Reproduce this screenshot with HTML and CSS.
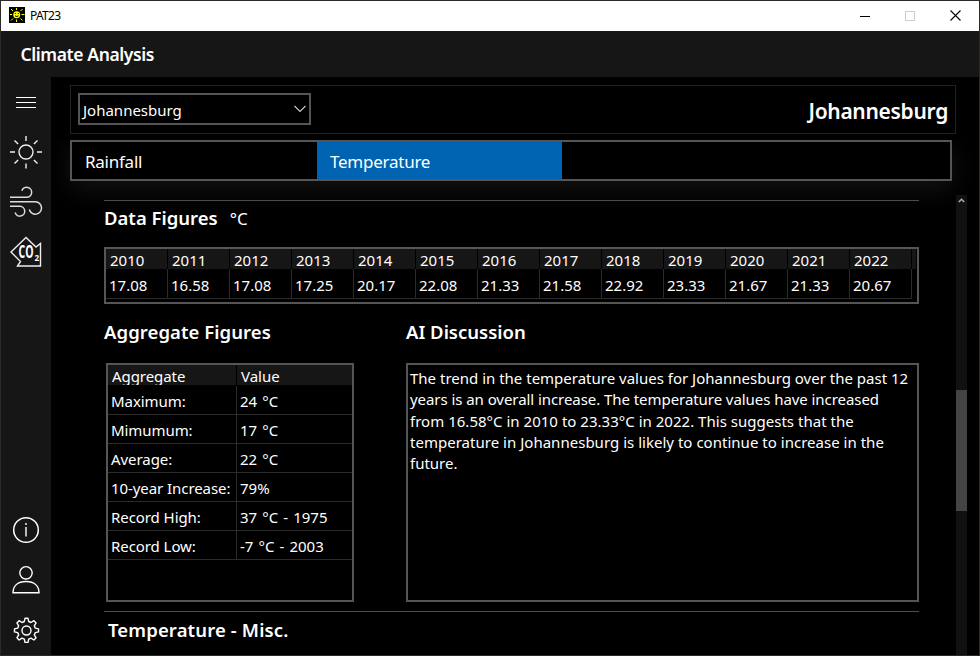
FILE: index.html
```html
<!DOCTYPE html>
<html lang="en">
<head>
<meta charset="utf-8">
<title>PAT23</title>
<link rel="stylesheet" href="styles.css">
</head>
<body>
<div class="window">
  <header class="titlebar">
    <svg class="app-icon" width="16" height="16" viewBox="0 0 16 16"><rect width="16" height="16" fill="#000"/><g stroke="#ff0" stroke-width="1" fill="none"><path d="M7.500 1v2M7.500 12.500v2.500M1 7.500h2M12.500 7.500h3M2 2l2 2M13.500 2l-2 2M2 13.500l2-2M13.500 13.500l-2-2" /></g><circle cx="7.700" cy="7.700" r="3.500" fill="#ff0"/><path d="M6.300 6v1M9.300 6v1M6 8.800q1.800 1.500 3.600 0" stroke="#000" fill="none"/></svg>
    <span class="app-name">PAT23</span>
    <div class="controls">
      <svg width="10" height="10" viewBox="0 0 10 10"><path d="M0 5.500h10" stroke="#000"/></svg>
      <svg width="10" height="10" viewBox="0 0 10 10"><rect x=".5" y=".5" width="9" height="9" fill="none" stroke="#ccc"/></svg>
      <svg width="11" height="11" viewBox="0 0 11 11"><path d="M.5.5l10 10M10.500.5l-10 10" stroke="#000" stroke-width="1.100"/></svg>
    </div>
  </header>
  <div class="heading"><span>Climate Analysis</span></div>
  <div class="body">
    <nav class="sidebar">
      <svg width="34" height="34" viewBox="0 0 34 34"><path d="M7 12.500h20M7 17.500h20M7 22.500h20" stroke="#fff"/></svg>
      <svg width="34" height="34" viewBox="0 0 34 34"><g fill="none" stroke="#eee" stroke-width="1.400"><circle cx="17" cy="17" r="7"/><path d="M17 1v5M17 28.500v5M1 17h5M28 17h5M5.500 5.500l3.600 3.600M28.500 5.500l-3.600 3.600M5.500 28.500l3.600-3.600M28.500 28.500l-3.600-3.600"/></g></svg>
      <svg width="34" height="34" viewBox="0 0 34 34"><g fill="none" stroke="#ddd" stroke-width="1.500"><path d="M1 12.300h16.500a5 5 0 1 0-4.600-6.500"/><path d="M1 16.800h25.500a6.200 6.200 0 1 1-6.200 7.700"/><path d="M1 21.300h10a4.900 4.900 0 1 1-4.900 6.200"/></g></svg>
      <svg width="34" height="34" viewBox="0 0 34 34"><path d="M17 2.500L2 17l9.500 9.500L8.500 31H31.500V8.500l-4.500 3.500z" fill="none" stroke="#eee" stroke-width="1.400"/><text class="co" x="9.500" y="23" textLength="15" lengthAdjust="spacingAndGlyphs">CO</text><text class="two" x="25.500" y="26">2</text></svg>
      <span class="spring"></span>
      <svg width="34" height="34" viewBox="0 0 34 34"><circle cx="17" cy="17" r="12.300" fill="none" stroke="#fff" stroke-width="1.500"/><path d="M17 14v9.500M17 10v2" stroke="#fff" stroke-width="1.400"/></svg>
      <svg width="34" height="34" viewBox="0 0 34 34"><g fill="none" stroke="#fff" stroke-width="1.400"><circle cx="17" cy="9.800" r="6.200"/><path d="M4 29.800C4 22.500 9 18.500 17 18.500s13 4 13 11.300z"/></g></svg>
      <svg width="34" height="34" viewBox="0 0 34 34"><g transform="translate(.5 .5)" fill="none" stroke="#fff" stroke-width="1.400" stroke-linejoin="round"><circle cx="17" cy="17" r="4.500"/><path d="M15.500 4.800h3l.7 3.200 2.300 1 2.900-1.800 2.200 2.200-1.800 2.900 1 2.300 3.200.8v3l-3.200.7-1 2.300 1.800 2.900-2.200 2.200-2.900-1.800-2.300 1-.7 3.200h-3l-.7-3.200-2.300-1-2.900 1.800-2.200-2.200 1.800-2.900-1-2.300L5 18.400v-3l3.200-.8 1-2.300-1.800-2.900 2.200-2.200L12.500 9l2.300-1z"/></g></svg>
    </nav>
    <main class="main">
      <div class="place">
        <div class="combo"><span>Johannesburg</span><svg width="12" height="8" viewBox="0 0 12 8"><path d="M.5 1L6 6.500 11.500 1" fill="none" stroke="#ccc" stroke-width="1.100"/></svg></div>
        <span class="place-name">Johannesburg</span>
      </div>
      <div class="tabs"><div class="tab">Rainfall</div><div class="tab active">Temperature</div></div>
      <div class="scroller">
        <div class="content">
          <section class="figures">
            <h2>Data Figures<span class="unit">°C</span></h2>
            <div class="years">
              <div class="year"><b>2010</b><span>17.08</span></div>
              <div class="year"><b>2011</b><span>16.58</span></div>
              <div class="year"><b>2012</b><span>17.08</span></div>
              <div class="year"><b>2013</b><span>17.25</span></div>
              <div class="year"><b>2014</b><span>20.17</span></div>
              <div class="year"><b>2015</b><span>22.08</span></div>
              <div class="year"><b>2016</b><span>21.33</span></div>
              <div class="year"><b>2017</b><span>21.58</span></div>
              <div class="year"><b>2018</b><span>22.92</span></div>
              <div class="year"><b>2019</b><span>23.33</span></div>
              <div class="year"><b>2020</b><span>21.67</span></div>
              <div class="year"><b>2021</b><span>21.33</span></div>
              <div class="year"><b>2022</b><span>20.67</span></div>
              <div class="filler"></div>
            </div>
          </section>
          <div class="split">
            <section class="agg">
              <h2>Aggregate Figures</h2>
              <div class="agg-table">
                <div class="row head"><div>Aggregate</div><div>Value</div></div>
                <div class="row"><div>Maximum:</div><div class="val">24 °C</div></div>
                <div class="row"><div>Mimumum:</div><div class="val">17 °C</div></div>
                <div class="row"><div>Average:</div><div class="val">22 °C</div></div>
                <div class="row"><div>10-year Increase:</div><div class="val">79%</div></div>
                <div class="row"><div>Record High:</div><div class="val">37 °C - 1975</div></div>
                <div class="row"><div>Record Low:</div><div class="val">-7 °C - 2003</div></div>
              </div>
            </section>
            <section class="ai">
              <h2>AI Discussion</h2>
              <p>The trend in the temperature values for Johannesburg over the past 12<br><span class="tight">years is an overall increase. The temperature values have increased</span><br><span class="loose">from 16.58°C in 2010 to 23.33°C in 2022. This suggests that the</span><br><span class="loose">temperature in Johannesburg is likely to continue to increase in the</span><br>future.</p>
            </section>
          </div>
          <section class="misc"><h2>Temperature - Misc.</h2></section>
        </div>
        <div class="scrollbar"><svg width="11" height="11" viewBox="0 0 11 11"><path d="M2.800 7L5.500 4.300 8.200 7" fill="none" stroke="#aaa" stroke-width="1.600"/></svg><div class="thumb"></div></div>
      </div>
    </main>
  </div>
</div>
</body>
</html>
```

FILE: styles.css
```css
* { box-sizing: border-box; }
body { margin: 0; background: #000; color: #fff; font: 15px "Noto Sans", "Open Sans", sans-serif; }
svg { display: block; flex: none; }
h2 { margin: 0; font-size: 18.500px; font-weight: 600; white-space: nowrap; }
.window { width: 980px; height: 656px; border: 1px solid #2b2a29; display: flex; flex-direction: column; overflow: hidden; }
.titlebar { height: 30px; flex: none; background: #fff; color: #000; display: flex; align-items: center; padding: 0 18px 0 8px; }
.app-icon { margin-top: -2px; }
.app-name { margin-left: 5px; font-size: 12px; letter-spacing: -.7px; line-height: 28px; }
.controls { margin-left: auto; display: flex; gap: 35px; align-items: center; margin-top: -1px; }
.heading { height: 46px; flex: none; background: #161616; padding-left: 19.500px; font-size: 17.500px; font-weight: 600; line-height: 47px; letter-spacing: -.4px; }
.body { flex: 1; display: flex; min-height: 0; }
.sidebar { width: 50px; background: #161616; display: flex; flex-direction: column; align-items: center; gap: 16px; padding: 8px 0 8px; }
.spring { flex: 1; }
.co { font: 700 17px "Open Sans", sans-serif; fill: #fff; }
.two { font: 700 8px "Open Sans", sans-serif; fill: #fff; }
.main { flex: 1; min-width: 0; display: flex; flex-direction: column; padding: 8px 12px 0 19px; }
.place { width: 886px; height: 49px; flex: none; border: 1px solid #222; display: flex; justify-content: space-between; padding: 7px; }
.combo { width: 233px; height: 32px; border: 2px solid #555; display: flex; align-items: center; justify-content: space-between; padding: 0 3px; }
.combo span { line-height: 28px; padding-top: 2px; }
.combo svg { margin-top: -1px; }
.place-name { font-size: 21px; font-weight: 600; line-height: 36px; letter-spacing: -.3px; }
.tabs { width: 882px; height: 41px; flex: none; margin-top: 6px; border: 2px solid #555; background: #000; display: flex; box-shadow: 0 8px 26px rgba(255,255,255,.08); clip-path: inset(0 -24px -40px -14px); }
.tab { width: 245px; padding-left: 13px; font-size: 17px; line-height: 39px; letter-spacing: -.25px; }
.active { background: #0063b1; }
.scroller { flex: 1; display: flex; justify-content: space-between; margin-top: 14px; min-height: 0; position: relative; }
.content { width: 815px; margin: 5px 0 0 34px; }
.figures { border-top: 1px solid #4c4c4c; height: 116px; }
.figures h2 { line-height: 34px; height: 36px; }
.unit { font-size: 17px; font-weight: 400; margin-left: 12px; }
.years { height: 57px; margin-top: 10px; border: 2px solid #555; display: flex; }
.year { width: 62px; height: 50px; flex: none; border-right: 1px solid #2b2b2b; border-bottom: 1px solid #2b2b2b; display: flex; flex-direction: column; }
.year b { font-weight: 400; height: 20px; margin-right: -1px; flex: none; background: #161616; line-height: 22px; padding-left: 4px; border-right: 1px solid #000; }
.year span { line-height: 33px; height: 29px; padding-left: 3px; }
.filler { width: 4px; height: 20px; background: #161616; }
.split { display: flex; }
.agg { width: 302px; }
.split h2 { line-height: 32px; }
.agg h2 { letter-spacing: .06px; }
.agg-table { width: 248px; height: 239px; margin: 15px 0 0 2px; border: 2px solid #555; }
.row { display: flex; height: 29px; border-bottom: 1px solid #2b2b2b; line-height: 31px; white-space: nowrap; }
.row div { flex: 1; padding-left: 3px; }
.row div:first-child { flex: none; width: 129px; border-right: 1px solid #2b2b2b; letter-spacing: -.07px; }
.row .val { word-spacing: 1.200px; }
.head { height: 21px; border-bottom-color: #000; background: #161616; line-height: 22px; }
.head div, .head div:first-child { overflow: hidden; padding-left: 4px; border-color: #000; }
.ai { width: 513px; }
.ai p { margin: 15px 0 0; height: 239px; border: 2px solid #555; padding: 3px 2px; line-height: 21.300px; white-space: nowrap; }
.tight { letter-spacing: -.06px; }
.loose { letter-spacing: .02px; }
.misc { border-top: 1px solid #4c4c4c; margin-top: 9px; padding-left: 4px; }
.misc h2 { line-height: 35px; letter-spacing: .13px; }
.scrollbar { width: 11px; background: #111; }
.thumb { height: 121px; margin-top: 184px; background: #444; }
```
